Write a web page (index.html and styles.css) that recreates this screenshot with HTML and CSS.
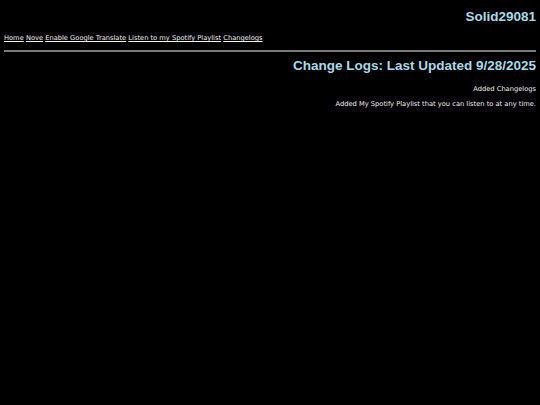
FILE: index.html
```html
<!DOCTYPE html>
<html lang="en">
<head>
<meta charset="utf-8">
<title>Solid29081</title>
<link rel="stylesheet" href="styles.css">
</head>
<body>
<header class="site-header">
  <h1 class="site-title">Solid29081</h1>
  <nav class="site-nav">
    <a href="#">Home</a> <a href="#">Nove</a> <a href="#">Enable Google Translate</a> <a href="#">Listen to my Spotify Playlist</a> <a href="#">Changelogs</a>
  </nav>
  <hr class="divider">
</header>
<main class="changelog">
  <h2 class="changelog-title">Change Logs: Last Updated 9/28/2025</h2>
  <p class="entry entry-first">Added Changelogs</p>
  <p class="entry">Added My Spotify Playlist that you can listen to at any time.</p>
</main>
</body>
</html>
```

FILE: styles.css
```css
html, body {
  background: #000;
}
body {
  margin: 4px;
  color: #f2f2f2;
  font-family: "DejaVu Sans", Verdana, sans-serif;
  font-size: 6.7px;
}
.site-title,
.changelog-title {
  font-family: "Liberation Sans", Arial, sans-serif;
  font-weight: bold;
  font-size: 13.5px;
  line-height: 16px;
  color: #add8e6;
  text-align: right;
}
.site-title {
  margin: 5px 0 0;
}
.site-nav {
  margin-top: 9px;
  line-height: 8px;
}
.site-nav a {
  color: #f2f2f2;
  text-decoration: underline;
}
.divider {
  margin: 8px 0 0;
  border: 0;
  height: 2px;
  background: #7a7a7a;
}
.changelog-title {
  margin: 6px 0 0;
}
.entry {
  margin: 6.5px 0 0;
  line-height: 8px;
  text-align: right;
}
.entry-first {
  margin-top: 11px;
}
```
